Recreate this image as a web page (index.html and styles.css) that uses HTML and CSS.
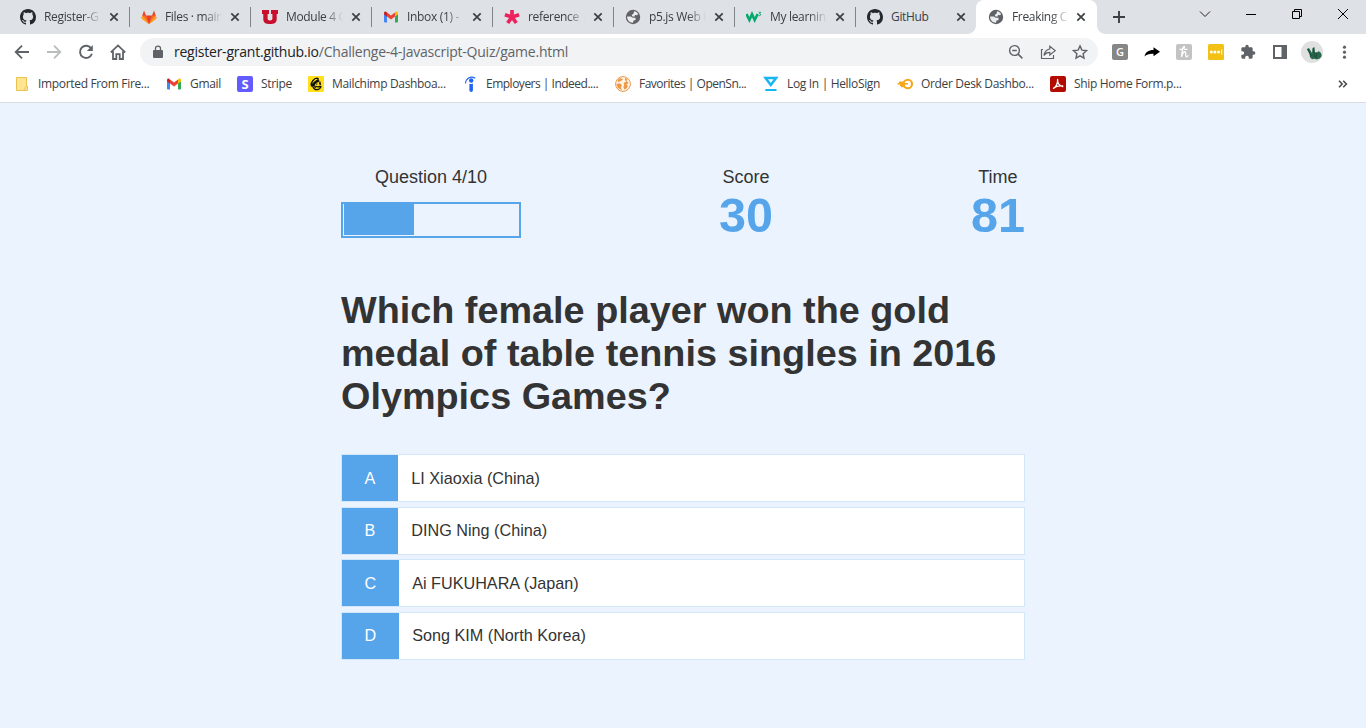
FILE: index.html
```html
<!DOCTYPE html>
<html lang="en">
<head>
<meta charset="utf-8">
<title>Freaking Quiz</title>
<link rel="stylesheet" href="styles.css">
</head>
<body>
<svg class="defs" aria-hidden="true">
  <symbol id="github" viewBox="0 0 16 16"><path fill="#24292f" d="M8 0C3.58 0 0 3.58 0 8c0 3.54 2.29 6.53 5.47 7.59.4.07.55-.17.55-.38 0-.19-.01-.82-.01-1.49-2.01.37-2.53-.49-2.69-.94-.09-.23-.48-.94-.82-1.13-.28-.15-.68-.52-.01-.53.63-.01 1.08.58 1.23.82.72 1.21 1.87.87 2.33.66.07-.52.28-.87.51-1.07-1.78-.2-3.64-.89-3.64-3.95 0-.87.31-1.59.82-2.15-.08-.2-.36-1.02.08-2.12 0 0 .67-.21 2.2.82.64-.18 1.32-.27 2-.27s1.36.09 2 .27c1.53-1.04 2.2-.82 2.2-.82.44 1.1.16 1.92.08 2.12.51.56.82 1.27.82 2.15 0 3.07-1.87 3.75-3.65 3.95.29.25.54.73.54 1.48 0 1.07-.01 1.93-.01 2.2 0 .21.15.46.55.38A8.01 8.01 0 0 0 16 8c0-4.42-3.58-8-8-8z"/></symbol>
  <symbol id="gmail" viewBox="0 0 16 16"><path fill="#4285f4" d="M1 4.500V12.600c0 .5.4.9.9.9H4V7z"/><path fill="#34a853" d="M12 13.500h2.100c.5 0 .9-.4.9-.9V4.500L12 7z"/><path fill="#ea4335" d="M4 7.600V3.500l4 3 4-3v4.100l-4 3z"/><path fill="#c5221f" d="M1 4.200v1.200l3 2.200V3.500l-.8-.6C2.300 2.200 1 2.900 1 4.200z"/><path fill="#fbbc04" d="M12 3.500v4.100l3-2.200V4.200c0-1.300-1.300-2-2.200-1.300z"/></symbol>
  <symbol id="globe" viewBox="0 0 16 16"><circle cx="8" cy="8" r="7.200" fill="#5f6368"/><path fill="#fff" fill-opacity=".88" d="M9.200 2.300c1.700.3 3.100 1.300 3.900 2.700l-1 1.300-2.100-.2-.6 1.600-2.300-.4-.3-1.500 1.500-.7zM2.100 7.500l3.700.1 2 1.200h2.600l.3 1.900-2.300 1-.4 2C4.900 13.900 2 11.300 2.100 7.500z"/></symbol>
  <symbol id="close" viewBox="0 0 10 10"><path d="M1.300 1.300l7.400 7.400M8.700 1.300L1.300 8.700" stroke="#3c4043" stroke-width="1.700" fill="none"/></symbol>
</svg>

<header class="browser">
  <div class="tabstrip">
    <div class="tab"><svg class="fav"><use href="#github"/></svg><span class="title">Register-G</span><svg class="close"><use href="#close"/></svg></div>
    <div class="tab"><svg class="fav" viewBox="0 0 16 16"><path fill="#e24329" d="M.6 8.800L3 1.500l2 5h6l2-5 2.400 7.300L8 15z"/><path fill="#fc6d26" d="M.6 8.800L1.800 6.500H5L8 15zM15.400 8.800l-1.200-2.300H11L8 15z"/><path fill="#fca326" d="M.6 8.800l.9-2.300L8 15 1 10.200zM15.400 8.800l-.9-2.300L8 15l7-4.800z"/></svg><span class="title">Files · main</span><svg class="close"><use href="#close"/></svg></div>
    <div class="tab"><svg class="fav" viewBox="0 0 16 16"><path fill="#c8102e" d="M0 1h7v4H5.600v4.600c0 1.300.8 1.900 2.400 1.900s2.400-.6 2.400-1.900V5H9V1h7v4h-1.300v5.200c0 3.200-2.300 4.900-6.700 4.900s-6.700-1.700-6.700-4.900V5H0z"/></svg><span class="title">Module 4 C</span><svg class="close"><use href="#close"/></svg></div>
    <div class="tab"><svg class="fav"><use href="#gmail"/></svg><span class="title">Inbox (1) -</span><svg class="close"><use href="#close"/></svg></div>
    <div class="tab"><svg class="fav" viewBox="0 0 16 16"><path d="M8 8V1M8 8L.9 5.700M8 8l7.100-2.300M8 8l-4.300 6M8 8l4.300 6" stroke="#ed225d" stroke-width="3.700"/></svg><span class="title">reference |</span><svg class="close"><use href="#close"/></svg></div>
    <div class="tab"><svg class="fav"><use href="#globe"/></svg><span class="title">p5.js Web E</span><svg class="close"><use href="#close"/></svg></div>
    <div class="tab"><svg class="fav" viewBox="0 0 16 16"><path d="M.5 5l2.900 6L6 5.200 8.700 11l3-6" stroke="#04aa6d" stroke-width="2.600" fill="none"/><path d="M12.700 3.300h2l-1.100 1.500c1.700 0 1.600 2.300-.9 1.800" stroke="#04aa6d" fill="none"/></svg><span class="title">My learnin</span><svg class="close"><use href="#close"/></svg></div>
    <div class="tab last"><svg class="fav"><use href="#github"/></svg><span class="title full">GitHub</span><svg class="close"><use href="#close"/></svg></div>
    <div class="tab active"><svg class="fav"><use href="#globe"/></svg><span class="title">Freaking C</span><svg class="close"><use href="#close"/></svg></div>
    <svg class="newtab" viewBox="0 0 14 14"><path d="M7 1v12M1 7h12" stroke="#3c4043" stroke-width="1.900"/></svg>
    <div class="window">
      <svg viewBox="0 0 12 12"><path d="M1 3.500l5 5 5-5" stroke="#222" fill="none"/></svg>
      <svg viewBox="0 0 12 12"><path d="M1 6.500h10" stroke="#000"/></svg>
      <svg viewBox="0 0 12 12"><path d="M1.500 3.500h7v7h-7zM3.500 3.500v-2h7v7h-2" stroke="#000" fill="none"/></svg>
      <svg viewBox="0 0 12 12"><path d="M1 1l10 10M11 1L1 11" stroke="#000" fill="none"/></svg>
    </div>
  </div>

  <div class="toolbar">
    <svg class="tool" viewBox="0 0 16 16"><path d="M15 8H2.200M8 1.700L1.700 8 8 14.300" stroke="#5f6368" stroke-width="1.800" fill="none"/></svg>
    <svg class="tool" viewBox="0 0 16 16"><path d="M1 8h12.800M8 1.700L14.300 8 8 14.300" stroke="#babcbe" stroke-width="1.800" fill="none"/></svg>
    <svg class="tool" viewBox="0 0 16 16"><path d="M13.300 4.600A6.100 6.100 0 1 0 13.900 9.800" stroke="#5f6368" stroke-width="1.900" fill="none"/><path fill="#5f6368" d="M14.800.9v6H8.800z"/></svg>
    <svg class="tool" viewBox="0 0 16 16"><path d="M.8 8.400L8 1.400l7.200 7M3 7.300V15h3.300v-4.800h3.400V15H13V7.300" stroke="#5f6368" stroke-width="1.800" fill="none"/></svg>
    <div class="omnibox">
      <svg class="lock" viewBox="0 0 10 14"><path fill="#5f6368" d="M1 5h8a1 1 0 0 1 1 1v6a1 1 0 0 1-1 1H1a1 1 0 0 1-1-1V6a1 1 0 0 1 1-1z"/><path d="M2.500 5.500V3.600a2.500 2.500 0 0 1 5 0v1.900" stroke="#5f6368" stroke-width="1.300" fill="none"/></svg>
      <span class="url"><span class="host">register-grant.github.io</span>/Challenge-4-Javascript-Quiz/game.html</span>
      <svg class="tool" viewBox="0 0 16 16"><circle cx="6.500" cy="6.500" r="4.900" stroke="#5f6368" stroke-width="1.400" fill="none"/><path d="M4.200 6.500h4.600M10.100 10.100l4.300 4.300" stroke="#5f6368" stroke-width="1.500"/></svg>
      <svg class="tool" viewBox="0 0 16 16"><path d="M3 5.500H1.500v9h12V11M9.800 5V2.200L15.200 6.600 9.800 11V8.300C7 8.300 5.300 9.300 4 11.500 4.500 7.800 6.300 5.600 9.800 5z" stroke="#5f6368" stroke-width="1.200" fill="none"/></svg>
      <svg class="tool" viewBox="0 0 16 16"><path d="M8 1.900l1.900 4.200 4.600.5-3.400 3.100.9 4.500L8 11.900l-4 2.300.9-4.500L1.500 6.600l4.600-.5z" stroke="#5f6368" stroke-width="1.400" fill="none"/></svg>
    </div>
    <div class="extensions">
      <span class="badge gray">G</span>
      <svg class="tool" viewBox="0 0 16 16"><path fill="#000" d="M.5 12.500C1.300 8.300 4.300 6 9.500 6V3.200L16 7.800l-6.500 4.400V9.700C5.500 9.500 2.700 10.200.5 12.500z"/></svg>
      <svg class="tool" viewBox="0 0 16 16"><rect width="16" height="16" rx="2" fill="#c3c3c3"/><path d="M3.500 5.500C6 5.500 9 4 8.500 2.700 7.500 1.500 6.300 5 5.500 13 6.500 9 8 7.500 9.300 7.800c1.500.5-.6 4.500.9 5 .8.200 1.500-.5 2-1.500M8 5.300h3.500" stroke="#fff" stroke-width="1.300" fill="none"/></svg>
      <svg class="tool" viewBox="0 0 16 16"><rect width="16" height="16" rx="1.500" fill="#f2c114"/><g fill="#fff"><circle cx="3.300" cy="8" r="1.500"/><circle cx="6.900" cy="8" r="1.500"/><circle cx="10.500" cy="8" r="1.500"/><path d="M13.200 5.500h1v5h-1z"/></g></svg>
      <svg class="tool" viewBox="0 0 24 24"><path fill="#5f6368" d="M20.500 11H19V7c0-1.100-.9-2-2-2h-4V3.500a2.500 2.500 0 0 0-5 0V5H4c-1.100 0-1.990.9-1.990 2v3.800H3.500c1.490 0 2.700 1.210 2.700 2.700s-1.210 2.700-2.700 2.700H2V20c0 1.100.9 2 2 2h3.800v-1.500c0-1.490 1.210-2.700 2.700-2.700s2.700 1.210 2.700 2.700V22H17c1.100 0 2-.9 2-2v-4h1.500a2.500 2.500 0 0 0 0-5z"/></svg>
      <svg class="tool" viewBox="0 0 16 16"><path d="M2 2h12v12H2z" stroke="#5f6368" stroke-width="2" fill="none"/><path fill="#5f6368" d="M9.500 2H14v12H9.500z"/></svg>
      <svg class="avatar" viewBox="0 0 22 22"><circle cx="11" cy="11" r="11" fill="#dfe0df"/><path fill="#28694e" d="M6 8l2-1 3 5 .5-5 2-1 .3 5 2.200 1 1.500-2 2.500 2 .8 3-2 2.500-3.300 1-2-.7-2.500.4-2-2-.5-3z"/><path d="M6.500 8l4 7M12.500 7l1 9M16 11l-1 6" stroke="#174c39" fill="none"/></svg>
      <svg class="tool" viewBox="0 0 16 16"><g fill="#5f6368"><circle cx="8.500" cy="3.200" r="1.600"/><circle cx="8.500" cy="8.200" r="1.600"/><circle cx="8.500" cy="13.200" r="1.600"/></g></svg>
    </div>
  </div>

  <nav class="bookmarks">
    <a><svg viewBox="0 0 16 16"><path fill="#ffe591" stroke="#e8c34f" d="M2.500 1.500h10v9h1v4h-11z"/><path fill="#ffe591" stroke="#e8c34f" d="M11 14.500v-3l1-1h1.500v3l-1 1z"/></svg><span>Imported From Fire...</span></a>
    <a><svg><use href="#gmail"/></svg><span>Gmail</span></a>
    <a><b class="badge stripe">S</b><span>Stripe</span></a>
    <a><svg viewBox="0 0 16 16"><rect width="16" height="16" rx="1" fill="#ffe01b"/><path d="M3 9.500C3.300 5.800 6 2.300 9 2.200c1.800 0 1.500 1.300 0 2.600C7 6.500 5.500 8 5 9.500" stroke="#111" stroke-width="1.300" fill="none"/><path fill="#111" d="M7 5l3-1.500 1.500 1.300-.8 1.200-2.700 1-1.300 2.500L5 11 3 10.500 3.200 8.500z"/><path d="M5 11c1 2.500 3 3 5 2.500 1.700-.5 2.800-1.700 3-3.500M8.300 8h1M11 7.700h.8M8 10.300c1.500 1 3 .7 4.500-.2M11.700 5.500l.8 3.500M6.500 9.500l1 2.500" stroke="#111" stroke-width="1.300" fill="none"/></svg><span>Mailchimp Dashboa...</span></a>
    <a><svg viewBox="0 0 16 16"><circle cx="9.200" cy="4.500" r="2.200" fill="#2164f3"/><path fill="#2164f3" d="M7.400 7.800c1.200.5 2.400.4 3.500-.2v7c0 1.700-3.500 1.700-3.500 0z"/><path d="M3.500 7.500C3.800 2.500 8.300-.6 13.300 2.200" stroke="#2164f3" stroke-width="1.100" fill="none"/></svg><span class="tight">Employers | Indeed....</span></a>
    <a><svg viewBox="0 0 16 16"><circle cx="8" cy="8" r="7.400" fill="#fff4e9" stroke="#ed9747"/><path fill="#ed9747" d="M2.500 4l3-2L8 3.500 5.500 5.300l-2.500.8zM10 2l2.500 1-1 2-1.500-.6zM1.500 8l3-.7 2.500 1.700L6 11.200l.8 3-4-2.400zM8.500 7l2-1 1-1.200 2 2.200-2 1.500 1.500 1.500-1.500 2.500-2 1L8.300 11l1-2z"/></svg><span class="tight">Favorites | OpenSn...</span></a>
    <a><svg viewBox="0 0 16 16"><path d="M2.500 2h10.600L7.800 9z" stroke="#16b6f4" stroke-width="2.500" fill="none"/><path d="M2.300 14h11.200" stroke="#16b6f4" stroke-width="2"/></svg><span>Log In | HelloSign</span></a>
    <a><svg viewBox="0 0 16 16"><circle cx="10.800" cy="8" r="4.200" stroke="#f5a81c" stroke-width="2.100" fill="none"/><path d="M2 6.200h5M.5 7.700h10.500M3 9.200h5M4 10.500h4" stroke="#f5a81c" stroke-width="1.500"/></svg><span>Order Desk Dashbo...</span></a>
    <a><svg viewBox="0 0 16 16"><rect width="16" height="16" rx="2" fill="#b30b00"/><path d="M3.500 12.300C5.500 11.500 8 7.500 7.600 3.500M7.600 3.500C7.300 7 9.500 10 12.700 10.500M4 11.800C6 10.300 9.500 9.600 12.700 10" stroke="#fff" stroke-width="1.300" stroke-linecap="round" fill="none"/></svg><span>Ship Home Form.p...</span></a>
    <svg class="more" viewBox="0 0 10 8"><path d="M1 .8L4.200 4 1 7.200M5.200.8L8.400 4 5.200 7.200" stroke="#4a4d51" stroke-width="1.600" fill="none"/></svg>
  </nav>
</header>

<main class="game">
  <section class="hud">
    <div class="hud-item">
      <p class="hud-label">Question 4/10</p>
      <div class="progress"><div class="progress-fill"></div></div>
    </div>
    <div class="hud-item"><p class="hud-label">Score</p><p class="hud-value">30</p></div>
    <div class="hud-item"><p class="hud-label">Time</p><p class="hud-value">81</p></div>
  </section>
  <h1>Which female player won the gold medal of table tennis singles in 2016 Olympics Games?</h1>
  <div class="choice"><p class="prefix">A</p><p class="answer">LI Xiaoxia (China)</p></div>
  <div class="choice"><p class="prefix">B</p><p class="answer">DING Ning (China)</p></div>
  <div class="choice"><p class="prefix">C</p><p class="answer">Ai FUKUHARA (Japan)</p></div>
  <div class="choice"><p class="prefix">D</p><p class="answer">Song KIM (North Korea)</p></div>
</main>
</body>
</html>
```

FILE: styles.css
```css
* { box-sizing: border-box; margin: 0; padding: 0; }
body { height: 728px; overflow: hidden; background: #ebf3ff; color: #333; font-family: "Liberation Sans", Arial, sans-serif; }
svg { display: block; flex: none; }
.defs { position: absolute; width: 0; height: 0; }

.browser { height: 103px; background: #fff; border-bottom: 1px solid #d9dce0; font-family: "Open Sans", "Noto Sans", sans-serif; font-size: 12px; color: #3c4043; }
.tabstrip { display: flex; height: 34px; padding-left: 8px; background: #dee1e6; }
.tab { display: flex; align-items: center; flex: none; width: 121px; height: 34px; padding-left: 12px; position: relative; }
.tab::after { content: ""; flex: none; width: 1px; height: 20px; margin-left: 10px; background: #808387; }
.tab.last::after, .tab.active::after { display: none; }
.fav { width: 16px; height: 16px; margin-right: 8px; }
.title { flex: none; width: 57px; margin-top: -1px; white-space: nowrap; font-size: 12px; letter-spacing: -.33px; -webkit-mask-image: linear-gradient(90deg, #000 68%, transparent); mask-image: linear-gradient(90deg, #000 68%, transparent); }
.title.full { -webkit-mask-image: none; mask-image: none; }
.tab .close { width: 10px; height: 10px; margin-left: 8px; }
.tab.active .close { margin-left: 7px; }
.tab.active { background: #fff; border-radius: 8px 8px 0 0; }
.tab.active::before { content: ""; position: absolute; left: -8px; right: -8px; bottom: 0; height: 8px; background: radial-gradient(circle at 0 0, transparent 7.500px, #fff 8px) 0 0 / 8px 8px no-repeat, radial-gradient(circle at 100% 0, transparent 7.500px, #fff 8px) 100% 0 / 8px 8px no-repeat; }
.newtab { width: 14px; height: 14px; margin: 10px 0 0 15px; }
.window { display: flex; gap: 34px; margin: 8px 17px 0 auto; }
.window svg { width: 12px; height: 12px; }

.toolbar { display: flex; align-items: center; height: 36px; padding-left: 14px; }
.tool { width: 16px; height: 16px; }
.toolbar > .tool { margin-right: 16px; }
.omnibox { display: flex; align-items: center; gap: 16px; width: 958px; height: 28px; margin-left: -2px; padding: 0 10px 0 13px; border-radius: 14px; background: #f1f3f4; }
.lock { width: 10px; height: 14px; }
.url { flex: 1; margin: -1px 0 0 -5px; font-size: 14px; letter-spacing: -.23px; white-space: nowrap; color: #5f6368; }
.host { color: #202124; }
.extensions { display: flex; align-items: center; gap: 16px; margin-left: 14px; }
.avatar { width: 22px; height: 22px; margin: 0 -3px; }
.badge { display: block; flex: none; width: 16px; height: 16px; border-radius: 2px; color: #fff; text-align: center; font: 600 11px/16px "Open Sans", sans-serif; }
.gray { background: #868686; }
.stripe { background: #635bff; font-weight: 700; font-size: 13px; }

.bookmarks { display: grid; grid-template-columns: 136px 55px 55px 138px 137px 132px 118px 137px 132px 1fr; column-gap: 16px; align-items: center; height: 28px; padding-left: 14px; }
.bookmarks a { display: flex; align-items: center; gap: 8px; white-space: nowrap; font-size: 12px; letter-spacing: -.33px; }
.bookmarks a span { margin-top: -2px; }
.bookmarks .tight { letter-spacing: -.5px; }
.bookmarks a svg { width: 16px; height: 16px; }
.more { width: 10px; height: 8px; justify-self: end; margin-right: 18px; }

.game { width: 684px; margin: 0 auto; padding-top: 64px; }
.hud { display: flex; justify-content: space-between; height: 122px; }
.hud-item { text-align: center; }
.hud-label { font-size: 18px; line-height: 21px; }
.hud-value { font-size: 48.600px; line-height: 54px; font-weight: 700; color: #56a5eb; }
.progress { width: 180px; height: 36px; margin-top: 14px; padding: 0 0 1px 1px; border: 2px solid #56a5eb; }
.progress-fill { width: 70px; height: 100%; background: #56a5eb; }
h1 { font-size: 37.800px; line-height: 43px; margin-right: -10px; }
.choice { display: flex; height: 48px; margin-bottom: 4.500px; background: #fff; border: 1px solid #d2e7fa; font-size: 16.200px; line-height: 19px; }
h1 + .choice { margin-top: 36px; }
.prefix { padding: 13.500px 22.500px; background: #56a5eb; color: #fff; }
.answer { padding: 13.500px; }
```
